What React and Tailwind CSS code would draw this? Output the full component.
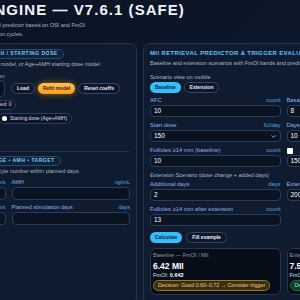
import { ChevronDown } from 'lucide-react';

const Field = ({ label, unit, value, select, check }) => (
  <div>
    <div className="flex items-center justify-between text-[5.8px] leading-[7px] whitespace-nowrap">
      <span className={`flex items-center text-[#93b1ee] ${check ? 'gap-[10px]' : ''}`}>
        {check && <span className="inline-block h-[6px] w-[6px] rounded-[1px] bg-white" />}
        {label}
      </span>
      <span className="text-[#4ea9e6]">{unit}</span>
    </div>
    <div className="mt-[1px] flex h-[12px] items-center justify-between rounded-[4px] border border-[#2b3c57] bg-[#0a1322] px-[3px] text-[6.5px] text-white">
      <span>{value}</span>
      {select && <ChevronDown size={7} strokeWidth={2.5} className="text-[#c9d4e3]" />}
    </div>
  </div>
);

const Pill = ({ children, className = '' }) => (
  <span className={`inline-flex h-[10px] items-center whitespace-nowrap rounded-full border border-[#2c3d57] bg-[#0c1628] px-[4px] text-[5px] text-[#d5deea] ${className}`}>
    {children}
  </span>
);

const SectionTag = ({ children }) => (
  <div className="flex">
    <span className="flex h-[10px] items-center whitespace-nowrap rounded-full border border-[#2d4a6a] bg-[#0e2238] px-[5px] text-[5px] font-bold uppercase tracking-[0.1em] text-[#7cc8f8]">
      {children}
    </span>
  </div>
);

const DarkBtn = ({ children }) => (
  <button className="h-[11px] whitespace-nowrap rounded-full border border-[#344660] bg-[#0e1729] px-[5px] text-[5px] font-bold leading-none text-[#e5edf7]">
    {children}
  </button>
);

const ResultCard = ({ title, value, fmoi, decision, tone }) => (
  <div className="rounded-[6px] border border-[#27364c] bg-[#070e1a] px-[2px] pb-[3px] pt-[3px] whitespace-nowrap">
    <p className="text-[5.5px] leading-[7px] text-[#8d9ab0]">{title}</p>
    <p className="mt-[2px] text-[8.5px] font-bold leading-[10px] text-white">{value}</p>
    <p className="mt-[1px] text-[5.5px] leading-[7px] text-[#d8e0ec]">
      FmOI: <b className="text-white">{fmoi}</b>
    </p>
    <div className="mt-[1px] flex">
      <span
        className={`flex h-[11px] items-center rounded-full border px-[4px] text-[5.3px] ${
          tone === 'amber'
            ? 'border-[#9a7526] bg-[#3a2e12] text-[#f3cf7a]'
            : 'border-[#1d6b47] bg-[#0f3d2b] text-[#9ff0c0]'
        }`}
      >
        {decision}
      </span>
    </div>
  </div>
);

export default function App() {
  return (
    <div className="h-screen w-full overflow-hidden bg-gradient-to-br from-[#0a1424] via-[#0c172a] to-[#14233a] font-['Liberation_Sans',Arial,sans-serif]">
      <div className="-ml-[127px] w-[570px] px-[7px] pt-[1px]">
        <h1 className="whitespace-nowrap text-[15px] font-bold leading-[18px] tracking-[0.07em] text-[#f1f5fb]">
          OSI/FMOI/AI ENGINE — V7.6.1 (SAFE)
        </h1>
        <p className="mt-[2px] whitespace-nowrap text-[5.5px] leading-[9px] text-[#aab6c8]">
          Auditable deterministic lite build of an MII retrieval predictor based on OSI and FmOI
          <br />
          with trigger timing guidance for IVF/ICSI stimulation cycles.
        </p>

        <div className="mt-[4px] flex gap-[6px]">
          {/* left card */}
          <section className="w-[257px] rounded-[7px] border border-[#23344d] bg-[#0f1b2f] px-[6px] pt-[5px]">
            <SectionTag>PREDICTOR MODEL — OSI · FMOI + MII / STARTING DOSE</SectionTag>
            <p className="mt-[2px] whitespace-nowrap text-[5.5px] leading-[7px] text-[#aab6c8]">
              Import a coefficients CSV, refit the OSI / FmOI model, or Age+AMH starting dose model.
            </p>
            <div className="mt-[5px] flex w-[118px] justify-between text-[5.5px] leading-[7px]">
              <span className="text-[#93b1ee]">Coefficients file</span>
              <span className="text-[#4ea9e6]">csv</span>
            </div>
            <div className="flex items-center gap-[6px]">
              <div className="h-[17px] w-[118px] shrink-0 rounded-[4px] border border-[#2b3c57] bg-[#0a1322]" />
              <div className="flex items-center gap-[3px]">
                <DarkBtn>Load</DarkBtn>
                <button className="h-[11px] whitespace-nowrap rounded-full bg-gradient-to-b from-[#fcc15a] to-[#f59e0b] px-[5px] text-[5px] font-bold leading-none text-[#3b2200] shadow-[0_0_6px_rgba(245,158,11,0.6)]">
                  Refit model
                </button>
                <DarkBtn>Reset coeffs</DarkBtn>
              </div>
            </div>
            <div className="mt-[3px] flex gap-[3px]">
              <Pill className="w-[82px]">Coefficients: built-in</Pill>
              <Pill>Rows loaded: 0</Pill>
            </div>
            <div className="mt-[3px] flex gap-[3px]">
              <Pill className="h-[11px] w-[108px] gap-[3px]">
                <span className="h-[4px] w-[4px] rounded-full border border-[#c9d4e3]" />
                OSI / FmOI predictor
              </Pill>
              <Pill className="h-[11px] gap-[3px] pl-[3px]">
                <span className="h-[5px] w-[5px] rounded-full bg-white" />
                Starting dose (Age+AMH)
              </Pill>
            </div>

            <div className="mt-[27px] h-px bg-[#22324a]" />

            <div className="mt-[4px]">
              <SectionTag>STARTING DOSE CALCULATORS — AGE • AMH • TARGET</SectionTag>
            </div>
            <p className="mt-[2px] whitespace-nowrap text-[5.5px] leading-[7px] text-[#aab6c8]">
              Estimates start dose by age, AMH &amp; target oocyte number within planned days.
            </p>
            <div className="mt-[4px] grid grid-cols-2 gap-x-[6px] gap-y-[4px]">
              {[
                ['Age', 'years'],
                ['AMH', 'ng/mL'],
                ['Target MII', 'count'],
                ['Planned stimulation days', 'days'],
              ].map(([l, u]) => (
                <div key={l}>
                  <div className="flex justify-between text-[5.5px] leading-[7px]">
                    <span className="text-[#93b1ee]">{l}</span>
                    <span className="text-[#4ea9e6]">{u}</span>
                  </div>
                  <div className="mt-[1px] h-[13px] rounded-[4px] border border-[#2b3c57] bg-[#0a1322]" />
                </div>
              ))}
            </div>
          </section>

          {/* right card */}
          <section className="w-[281px] rounded-[7px] border border-[#23344d] bg-[#0f1c30] px-[6px] pb-[8px] pt-[5px]">
            <h2 className="whitespace-nowrap text-[6px] font-bold leading-[9px] tracking-[0.06em] text-[#67c1f5]">
              MII RETRIEVAL PREDICTOR &amp; TRIGGER EVALUATION
            </h2>
            <p className="mt-[2px] whitespace-nowrap text-[5.5px] leading-[7px] text-[#aab6c8]">
              Baseline and extension scenarios with FmOI bands and predicted MII counts.
            </p>
            <p className="mt-[7px] text-[5.6px] leading-[7px] text-[#aab6c8]">Scenario view on mobile</p>
            <div className="mt-px flex gap-[3px]">
              <button className="h-[11px] rounded-full bg-[#38bdf8] px-[5px] text-[5px] font-bold leading-none text-[#06243d]">
                Baseline
              </button>
              <DarkBtn>Extension</DarkBtn>
            </div>

            <div className="mt-[4px] grid grid-cols-2 gap-x-[6px] gap-y-[5px]">
              <Field label="AFC" unit="count" value="10" />
              <Field label="Basal FSH" unit="IU/L" value="8" />
              <Field label="Start dose" unit="IU/day" value="150" select />
              <Field label="Days (baseline)" unit="days" value="10" />
              <Field label="Follicles ≥14 mm (baseline)" unit="count" value="10" />
              <Field label="Use total dose (IU)" unit="IU" value="1500" check />
            </div>
            <p className="mt-[5px] text-[5.5px] leading-[7px] text-[#aab6c8]">
              Extension Scenario (dose change + added days)
            </p>
            <div className="mt-[2px] grid grid-cols-2 gap-x-[6px] gap-y-[5px]">
              <Field label="Additional days" unit="days" value="2" />
              <Field label="Extension dose" unit="IU/day" value="200" />
              <Field label="Follicles ≥14 mm after extension" unit="count" value="13" />
            </div>
            <div className="mt-[6px] flex gap-[4px]">
              <button className="h-[11px] rounded-full bg-[#38bdf8] px-[5px] text-[5px] font-bold leading-none text-[#06243d]">
                Calculate
              </button>
              <DarkBtn>Fill example</DarkBtn>
            </div>
            <div className="mt-[5px] grid grid-cols-2 gap-x-[6px]">
              <ResultCard
                title="Baseline — FmOI / MII"
                value="6.42 MII"
                fmoi="0.642"
                decision="Decision: Good 0.60–0.72 → Consider trigger"
                tone="amber"
              />
              <ResultCard
                title="Extension — FmOI / MII"
                value="7.52 MII"
                fmoi="0.694"
                decision="Decision: Good 0.60–0.72 → Trigger"
                tone="green"
              />
            </div>
          </section>
        </div>
      </div>
    </div>
  );
}
